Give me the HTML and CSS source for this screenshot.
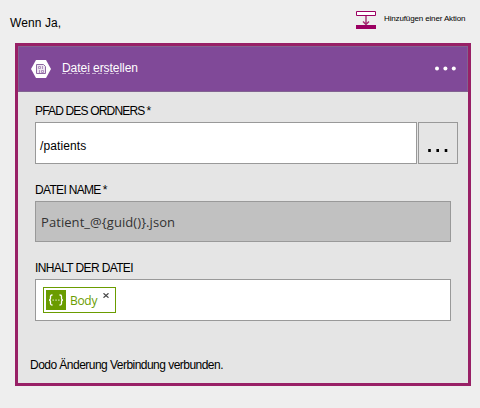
FILE: index.html
```html
<!DOCTYPE html>
<html lang="de">
<head>
<meta charset="utf-8">
<title>Datei erstellen</title>
<link rel="stylesheet" href="styles.css">
</head>
<body>
<header class="topbar">
  <span class="condition">Wenn Ja,</span>
  <div class="add-action">
    <svg width="20" height="18" viewBox="0 0 20 18">
      <path d="M.5.5h19v4H.5z" fill="#fff" stroke="#9b0062"/>
      <path d="M10 5v9M7 10.500l3 3 3-3" fill="none" stroke="#a32870" stroke-width="1.400"/>
      <path d="M0 14h20v4H0z" fill="#9b0062"/>
    </svg>
    <span class="add-label">Hinzufügen einer Aktion</span>
  </div>
</header>
<main class="card">
  <div class="card-header">
    <svg class="file-icon" width="20" height="18" viewBox="0 0 20 18">
      <path d="M5 0h10l5 9-5 9H5L0 9z" fill="#fff"/>
      <path d="M5.500 4.500h7l2 2v7h-9z" fill="#eee6f1" stroke="#8e68a2"/>
      <path d="M7.500 6.500h2v2h-2zM11.500 6v3M8.500 10v3M10.500 10.500h2v2h-2z" fill="none" stroke="#aa8bba" stroke-width=".9"/>
    </svg>
    <span class="title"><span class="marked">Datei erste</span>llen</span>
    <svg class="menu" width="21" height="5" viewBox="0 0 21 5" fill="#fff">
      <circle cx="2" cy="2.500" r="2"/><circle cx="10.400" cy="2.500" r="2"/><circle cx="18.800" cy="2.500" r="2"/>
    </svg>
  </div>
  <div class="form">
    <div class="label label-path">PFAD DES ORDNERS<span class="star">*</span></div>
    <div class="path-row">
      <div class="field path"><span class="path-text">/patients</span></div>
      <div class="browse">
        <svg width="20" height="3" viewBox="0 0 20 3"><path d="M.2 0h2.600v3H.2zM8.400 0H11v3H8.400zM16.700 0h2.600v3h-2.600z"/></svg>
      </div>
    </div>
    <div class="label label-name">DATEI NAME<span class="star">*</span></div>
    <div class="field name"><span class="name-text">Patient_@{guid()}.json</span></div>
    <div class="label label-content">INHALT DER DATEI</div>
    <div class="field content">
      <div class="token">
        <svg width="20" height="20" viewBox="0 0 20 20">
          <path d="M0 0h20v20H0z" fill="#6a9c00"/>
          <path d="M6.500 5H6q-1.500 0-1.500 1.500v2Q4.500 10 3 10q1.500 0 1.500 1.500v2Q4.500 15 6 15h.5M13.500 5h.5q1.500 0 1.500 1.500v2q0 1.500 1.500 1.500-1.500 0-1.500 1.500v2q0 1.500-1.500 1.500h-.5" fill="none" stroke="#fff" stroke-width="1.300"/>
          <path d="M6.500 9.500h1.300v1.300H6.500zM9.400 9.500h1.300v1.300H9.400zM12.200 9.500h1.300v1.300h-1.300z" fill="#dbe8c0"/>
        </svg>
        <span class="token-text">Body</span>
        <svg class="close" width="6" height="5" viewBox="0 0 6 5"><path d="M.5.3l5 4.400M5.500.3l-5 4.400" stroke="#444" stroke-width="1.200"/></svg>
      </div>
    </div>
  </div>
  <footer class="status">Dodo Änderung Verbindung verbunden.</footer>
</main>
</body>
</html>
```
FILE: styles.css
```css
* { box-sizing: border-box; }
body {
  margin: 0;
  width: 480px;
  height: 408px;
  background: #eee;
  color: #000;
  font: 12px/16px "Liberation Sans", Arial, sans-serif;
  white-space: nowrap;
  overflow: hidden;
}
svg { display: block; flex: none; }
.topbar {
  display: flex;
  justify-content: space-between;
  height: 43px;
  padding: 11px 14px 0 10px;
}
.condition { padding-top: 4px; letter-spacing: .1px; }
.add-action { display: flex; width: 110px; gap: 8px; }
.add-label { font-size: 8px; line-height: 16px; letter-spacing: -.14px; }
.card {
  width: 456px;
  height: 343px;
  margin-left: 15px;
  border: 3px solid #982066;
  background: #e5e5e5;
}
.card-header {
  display: flex;
  align-items: center;
  height: 46px;
  padding: 0 11px 0 12px;
  border: 1px solid #826391;
  background: #804998;
  color: #fff;
}
.title { margin: -2px 0 0 11px; letter-spacing: -.05px; }
.marked {
  background: repeating-linear-gradient(90deg, #c6add0 0 4px, transparent 4px 6px) 0 calc(100% - 1px) / 100% 1px no-repeat;
}
.menu { margin: -1px 0 0 auto; }
.form { padding: 11px 9px 0 17px; }
.label { height: 19px; }
.label-path { letter-spacing: -.83px; }
.label-name { margin-top: 18px; letter-spacing: -.68px; }
.label-content { margin-top: 18px; letter-spacing: -.63px; }
.star { margin-left: 2px; }
.path-row { display: flex; gap: 1px; }
.field {
  display: flex;
  align-items: center;
  width: 416px;
  height: 42px;
  border: 1px solid #999;
  background: #fff;
}
.path { width: 382px; padding: 6px 0 0 4px; }
.path-text { letter-spacing: .1px; }
.browse {
  display: flex;
  justify-content: center;
  width: 40px;
  height: 42px;
  padding-top: 26px;
  border: 1px solid #999;
}
.name { height: 41px; padding-left: 5px; background: #c1c1c1; color: #333; }
.name-text { font: 13px/18px "Open Sans", sans-serif; letter-spacing: .07px; }
.content { padding-left: 7px; }
.token {
  display: flex;
  align-items: center;
  width: 73px;
  height: 26px;
  padding-left: 2px;
  border: 1px solid #6a9c00;
}
.token-text {
  width: 27px;
  margin: 2px 0 0 4px;
  color: #6a9c00;
  font: 12px/18px "Open Sans", sans-serif;
  letter-spacing: -.3px;
}
.close { margin: 0 0 10px 6px; }
.status { margin: 36px 0 0 12px; letter-spacing: -.53px; }
```
